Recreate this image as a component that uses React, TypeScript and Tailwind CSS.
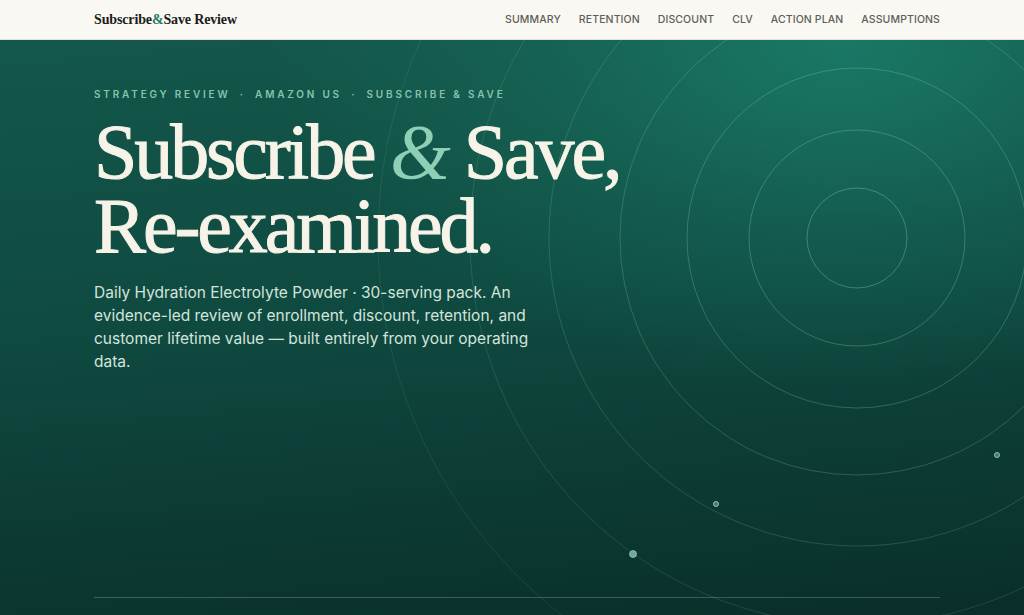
const NAV = ['Summary', 'Retention', 'Discount', 'CLV', 'Action Plan', 'Assumptions'];

const RINGS = [
  { r: 50, o: 0.32 },
  { r: 108, o: 0.28 },
  { r: 170, o: 0.25 },
  { r: 237, o: 0.22 },
  { r: 308, o: 0.18 },
  { r: 387, o: 0.14 },
  { r: 479, o: 0.1 },
];

function Orbits() {
  // concentric rings centred right of the headline, with a few satellites
  return (
    <svg className="pointer-events-none absolute inset-0 h-full w-full" viewBox="0 0 1024 575" preserveAspectRatio="xMinYMin slice">
      {RINGS.map(ring => (
        <circle key={ring.r} cx="857" cy="198" r={ring.r} fill="none" stroke="#9fe0c8" strokeOpacity={ring.o} strokeWidth="1" />
      ))}
      <circle cx="633" cy="514" r="3.5" fill="#6fa898" stroke="#a9dccb" strokeOpacity="0.6" strokeWidth="1" />
      <circle cx="716" cy="464" r="2.5" fill="#3e7c6c" stroke="#a9dccb" strokeOpacity="0.8" strokeWidth="1" />
      <circle cx="997" cy="415" r="2.5" fill="#3e7c6c" stroke="#a9dccb" strokeOpacity="0.8" strokeWidth="1" />
    </svg>
  );
}

export default function App() {
  return (
    <div className="min-h-screen bg-[#0b2f2a] font-['Inter','Liberation_Sans',sans-serif]">
      <header className="flex h-10 items-center justify-between border-b border-[#e4e2d8] bg-[#f9f8f2] pl-[94px] pr-[84px]">
        <div className="font-['Liberation_Serif',serif] text-[14px] font-bold tracking-[-0.01em] text-[#1c1c1c]">
          Subscribe<span className="text-[#1e7a5c]">&amp;</span>Save Review
        </div>
        <nav className="flex items-center gap-[18px]">
          {NAV.map(label => (
            <a key={label} className="text-[10.5px] font-medium uppercase tracking-[0.01em] text-[#5e5e5a]">
              {label}
            </a>
          ))}
        </nav>
      </header>

      <section className="relative h-[575px] overflow-hidden bg-[radial-gradient(ellipse_70%_75%_at_82%_0%,#1a7865_0%,rgba(23,110,92,0.45)_45%,transparent_80%),linear-gradient(175deg,#14574b_0%,#0f4a40_45%,#0a2e29_100%)]">
        <Orbits />
        <div className="relative flex h-full flex-col pl-[94px] pr-[84px]">
          <div className="mt-[47px] text-[10px] font-semibold uppercase tracking-[0.28em] text-[#86c3ae]">
            Strategy Review <span className="mx-[4px]">·</span> Amazon US <span className="mx-[4px]">·</span> Subscribe &amp; Save
          </div>

          <h1 className="mt-[13px] font-['Liberation_Serif',serif] text-[78px] leading-[74px] tracking-[-0.04em] text-[#f7f3e8] [-webkit-text-stroke:1px_#f7f3e8]">
            Subscribe <span className="italic text-[#8fcfb6] [-webkit-text-stroke:0px]">&amp;</span> Save,
            <br />
            Re-examined.
          </h1>

          <p className="mt-[18px] w-[450px] text-[15.5px] leading-[23px] text-[#d3e4dc]">
            Daily Hydration Electrolyte Powder · 30-serving pack. An evidence-led review of enrollment, discount, retention, and
            customer lifetime value — built entirely from your operating data.
          </p>

          <div className="mt-auto mb-[17px] h-px bg-[#ffffff]/20" />
        </div>
      </section>
    </div>
  );
}
